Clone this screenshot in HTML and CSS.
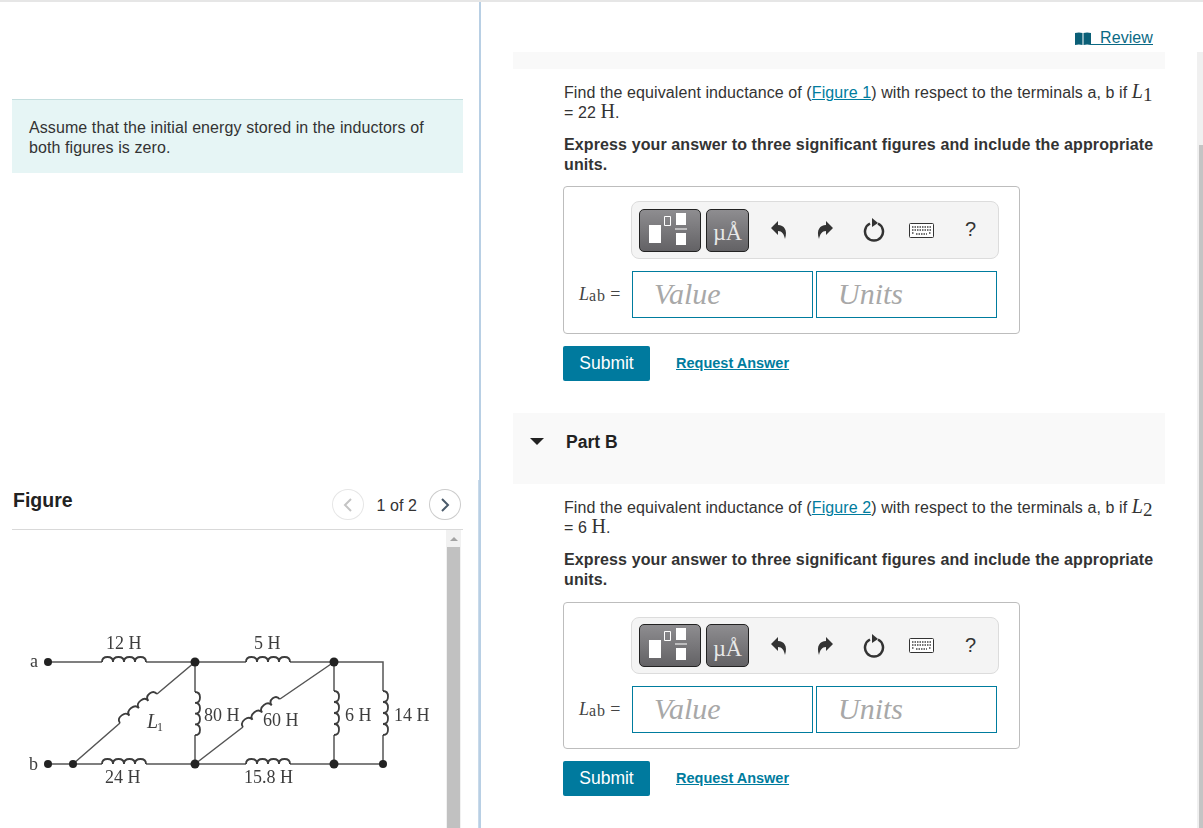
FILE: index.html
```html
<!DOCTYPE html>
<html lang="en">
<head>
    <meta charset="UTF-8">
    <title>Equivalent inductance</title>
    <link rel="stylesheet" href="styles.css">
</head>
<body>
<div class="page">
    <!-- left column: intro and figure -->
    <div class="left">
        <div class="intro">Assume that the initial energy stored in the inductors of both figures is zero.</div>
        <div class="fig-head">
            <span class="fig-title">Figure</span>
            <div class="pager">
                <span class="pager-btn off"><svg width="10" height="14" viewBox="0 0 10 14"><path d="M8 1 L2 7 L8 13" fill="none" stroke="#c4c4c4" stroke-width="2"/></svg></span>
                <span class="pager-text">1 of 2</span>
                <span class="pager-btn"><svg width="10" height="14" viewBox="0 0 10 14"><path d="M2 1 L8 7 L2 13" fill="none" stroke="#4a5a6a" stroke-width="2"/></svg></span>
            </div>
        </div>
        <div class="fig-body">
            <svg class="circuit" width="434" height="298" viewBox="12 530 434 298">
                <g class="wire">
                    <path d="M47 662 H102 M146 662 H246 M290 662 H383 V691 M383 735 V764 H290 M246 764 H146 M102 764 H48"/>
                    <path d="M195 662 V692 M195 735 V764 M334 662 V691 M334 735 V764"/>
                    <path d="M73 764 L120 723 M157 694 L195 662 M195 764 L243 727 M280 699 L334 662"/>
                </g>
                <g class="coil">
                    <path d="M102 662 q0 -5 5.500 -5 q5.500 0 5.500 5 q0 -5 5.500 -5 q5.500 0 5.500 5 q0 -5 5.500 -5 q5.500 0 5.500 5 q0 -5 5.500 -5 q5.500 0 5.500 5"/>
                    <path d="M246 662 q0 -5 5.500 -5 q5.500 0 5.500 5 q0 -5 5.500 -5 q5.500 0 5.500 5 q0 -5 5.500 -5 q5.500 0 5.500 5 q0 -5 5.500 -5 q5.500 0 5.500 5"/>
                    <path d="M102 764 q0 -5 5.500 -5 q5.500 0 5.500 5 q0 -5 5.500 -5 q5.500 0 5.500 5 q0 -5 5.500 -5 q5.500 0 5.500 5 q0 -5 5.500 -5 q5.500 0 5.500 5"/>
                    <path d="M246 764 q0 -5 5.500 -5 q5.500 0 5.500 5 q0 -5 5.500 -5 q5.500 0 5.500 5 q0 -5 5.500 -5 q5.500 0 5.500 5 q0 -5 5.500 -5 q5.500 0 5.500 5"/>
                    <path d="M195 692 q5 0 5 5.400 q0 5.400 -5 5.400 q5 0 5 5.400 q0 5.400 -5 5.400 q5 0 5 5.400 q0 5.400 -5 5.400 q5 0 5 5.400 q0 5.400 -5 5.400"/>
                    <path d="M334 691 q5 0 5 5.500 q0 5.500 -5 5.500 q5 0 5 5.500 q0 5.500 -5 5.500 q5 0 5 5.500 q0 5.500 -5 5.500 q5 0 5 5.500 q0 5.500 -5 5.500"/>
                    <path d="M383 691 q5 0 5 5.500 q0 5.500 -5 5.500 q5 0 5 5.500 q0 5.500 -5 5.500 q5 0 5 5.500 q0 5.500 -5 5.500 q5 0 5 5.500 q0 5.500 -5 5.500"/>
                    <path transform="translate(120 723) rotate(-38)" d="M0 0 q0 -5 6 -5 q6 0 6 5 q0 -5 6 -5 q6 0 6 5 q0 -5 6 -5 q6 0 6 5 q0 -5 5.500 -5 q5.500 0 5.500 5"/>
                    <path transform="translate(243 727) rotate(-37)" d="M0 0 q0 -5 6 -5 q6 0 6 5 q0 -5 6 -5 q6 0 6 5 q0 -5 6 -5 q6 0 6 5 q0 -5 5 -5 q5 0 5 5"/>
                </g>
                <g class="node">
                    <circle cx="48" cy="662" r="4"/>
                    <circle cx="195" cy="662" r="4.500"/>
                    <circle cx="334" cy="662" r="4.500"/>
                    <circle cx="48" cy="764" r="4"/>
                    <circle cx="73" cy="764" r="4"/>
                    <circle cx="195" cy="764" r="4.500"/>
                    <circle cx="334" cy="764" r="4.500"/>
                    <circle cx="383" cy="764" r="4"/>
                </g>
                <g class="label">
                    <text x="30" y="667">a</text>
                    <text x="29" y="770">b</text>
                    <text x="106" y="649">12 H</text>
                    <text x="254" y="649">5 H</text>
                    <text x="105" y="783">24 H</text>
                    <text x="244" y="783">15.8 H</text>
                    <text x="204" y="721">80 H</text>
                    <text x="263" y="726">60 H</text>
                    <text x="345" y="721">6 H</text>
                    <text x="394" y="721">14 H</text>
                    <text x="147" y="728" class="label-l">L</text>
                    <text x="157" y="731" class="label-sub">1</text>
                </g>
            </svg>
            <div class="fig-scroll">
                <span class="fig-arrow"></span>
                <span class="fig-thumb"></span>
            </div>
        </div>
    </div>

    <!-- right column: the two parts -->
    <div class="right">
        <div class="review-row">
            <a class="review" href="#">
                <svg width="16" height="13" viewBox="0 0 16 13"><path d="M0 1 Q4 0 7.500 1 V13 Q4 12 0 13 Z M8.500 1 Q12 0 16 1 V13 Q12 12 8.500 13 Z" fill="#0b5f77"/></svg>
                &nbsp;Review
            </a>
        </div>
        <div class="part-top"></div>

        <div class="part-body first">
            <p class="q">Find the equivalent inductance of (<a href="#">Figure 1</a>) with respect to the terminals a, b if <span class="m"><i>L</i><sub>1</sub></span> = 22 <span class="m">H</span>.</p>
            <p class="q strong">Express your answer to three significant figures and include the appropriate units.</p>
            <div class="answer">
                <div class="toolbar">
                    <span class="tool tool-frac">
                        <svg width="60" height="41" viewBox="0 0 60 41"><path d="M9 15 H21 V33 H9 Z M36 3 H46 V15 H36 Z M36 23 H46 V35 H36 Z M35 18.500 H47 V19.500 H35 Z" fill="#fff"/><path d="M24.500 6.500 H30.500 V15.500 H24.500 Z" fill="none" stroke="#fff"/></svg>
                    </span>
                    <span class="tool tool-unit">&micro;&Aring;</span>
                    <svg class="ico undo" width="18" height="20" viewBox="0 0 18 20"><path d="M1 8 L8 1 V5 C14 5 18 10 15 19 C14 14 12 11 8 11 V15 Z" fill="#333"/></svg>
                    <svg class="ico redo" width="18" height="20" viewBox="0 0 18 20"><path d="M17 8 L10 1 V5 C4 5 0 10 3 19 C4 14 6 11 10 11 V15 Z" fill="#333"/></svg>
                    <svg class="ico reset" width="22" height="24" viewBox="0 0 22 24"><path d="M7 5.500 A9 9 0 1 0 15 5.500" fill="none" stroke="#333" stroke-width="2.500"/><path d="M9 0 L15 5 L9 9 Z" fill="#333"/></svg>
                    <svg class="ico kbd" width="25" height="15" viewBox="0 0 25 15"><rect x="0.500" y="0.500" width="24" height="14" rx="1" fill="#fff" stroke="#333"/><path d="M3 4 H22 M3 7 H22 M3 10 H5 M7 11 H18 M20 10 H22" stroke="#444" stroke-width="1.500" stroke-dasharray="1.500 1"/></svg>
                    <span class="help">?</span>
                </div>
                <div class="inputs">
                    <span class="lab"><i>L</i><span class="lab-sub">ab</span> =</span>
                    <span class="field">Value</span>
                    <span class="field">Units</span>
                </div>
            </div>
            <div class="actions">
                <span class="submit">Submit</span>
                <a class="request" href="#">Request Answer</a>
            </div>
        </div>

        <div class="part-head">
            <span class="tri"></span>
            <span class="part-name">Part B</span>
        </div>

        <div class="part-body second">
            <p class="q">Find the equivalent inductance of (<a href="#">Figure 2</a>) with respect to the terminals a, b if <span class="m"><i>L</i><sub>2</sub></span> = 6 <span class="m">H</span>.</p>
            <p class="q strong">Express your answer to three significant figures and include the appropriate units.</p>
            <div class="answer">
                <div class="toolbar">
                    <span class="tool tool-frac">
                        <svg width="60" height="41" viewBox="0 0 60 41"><path d="M9 15 H21 V33 H9 Z M36 3 H46 V15 H36 Z M36 23 H46 V35 H36 Z M35 18.500 H47 V19.500 H35 Z" fill="#fff"/><path d="M24.500 6.500 H30.500 V15.500 H24.500 Z" fill="none" stroke="#fff"/></svg>
                    </span>
                    <span class="tool tool-unit">&micro;&Aring;</span>
                    <svg class="ico undo" width="18" height="20" viewBox="0 0 18 20"><path d="M1 8 L8 1 V5 C14 5 18 10 15 19 C14 14 12 11 8 11 V15 Z" fill="#333"/></svg>
                    <svg class="ico redo" width="18" height="20" viewBox="0 0 18 20"><path d="M17 8 L10 1 V5 C4 5 0 10 3 19 C4 14 6 11 10 11 V15 Z" fill="#333"/></svg>
                    <svg class="ico reset" width="22" height="24" viewBox="0 0 22 24"><path d="M7 5.500 A9 9 0 1 0 15 5.500" fill="none" stroke="#333" stroke-width="2.500"/><path d="M9 0 L15 5 L9 9 Z" fill="#333"/></svg>
                    <svg class="ico kbd" width="25" height="15" viewBox="0 0 25 15"><rect x="0.500" y="0.500" width="24" height="14" rx="1" fill="#fff" stroke="#333"/><path d="M3 4 H22 M3 7 H22 M3 10 H5 M7 11 H18 M20 10 H22" stroke="#444" stroke-width="1.500" stroke-dasharray="1.500 1"/></svg>
                    <span class="help">?</span>
                </div>
                <div class="inputs">
                    <span class="lab"><i>L</i><span class="lab-sub">ab</span> =</span>
                    <span class="field">Value</span>
                    <span class="field">Units</span>
                </div>
            </div>
            <div class="actions">
                <span class="submit">Submit</span>
                <a class="request" href="#">Request Answer</a>
            </div>
        </div>
    </div>

    <div class="page-scroll"><span class="page-thumb"></span></div>
</div>
</body>
</html>
```

FILE: styles.css
```css
* {
    margin: 0;
    padding: 0;
    box-sizing: border-box;
}

html, body {
    width: 1203px;
    height: 828px;
    overflow: hidden;
    background: #fff;
}

body {
    font: 16px/20px "Liberation Sans", Arial, sans-serif;
    letter-spacing: .09px;
    color: #333;
}

a {
    color: #007c9e;
}

.page {
    display: flex;
    height: 828px;
    border-top: 2px solid #e6e6e6;
}

/* left column */
.left {
    position: relative;
    width: 481px;
    flex: none;
    padding: 97px 0 0 12px;
    border-right: 2px solid #b8cfe4;
}

/* the divider gets 1px wider next to the figure */
.left::after {
    content: '';
    position: absolute;
    top: 478px;
    bottom: 0;
    right: 0;
    width: 1px;
    background: #c9daea;
}

.intro {
    width: 451px;
    height: 74px;
    padding: 18px 17px;
    background: #e6f5f5;
    border-top: 1px solid #c4dede;
}

.fig-head {
    width: 451px;
    height: 57px;
    margin-top: 300px;
    padding: 15px 2px 0 0;
    border-bottom: 1px solid #d9d9d9;
    display: flex;
    justify-content: space-between;
    align-items: flex-start;
}

.fig-title {
    margin: 2px 0 0 1px;
    font-size: 19.500px;
    letter-spacing: 0;
    font-weight: bold;
    color: #222;
}

.pager {
    display: flex;
    align-items: flex-start;
    margin-top: 1px;
}

.pager-btn {
    width: 32px;
    height: 31px;
    border: 1px solid #ccc;
    border-radius: 50%;
    display: flex;
    align-items: center;
    justify-content: center;
}

.pager-btn.off {
    border-color: #e6e6e6;
}

.pager-text {
    margin: 7px 12px 0 12px;
}

.fig-body {
    display: flex;
    width: 451px;
    height: 298px;
}

.circuit {
    flex: none;
    width: 434px;
    filter: blur(.3px);
}

.wire, .coil {
    fill: none;
    stroke: #555;
    stroke-width: 1.500;
}

.coil {
    stroke: #3c3c3c;
    stroke-width: 1.800;
}

.node {
    fill: #222;
}

.label {
    font: 18px "Liberation Serif", "Times New Roman", serif;
    letter-spacing: 0;
    fill: #3d3d3d;
}

.label-l {
    font-style: italic;
    font-size: 20px;
}

.label-sub {
    font-size: 12px;
}

.fig-scroll {
    width: 15px;
    background: #f1f1f1;
    display: flex;
    flex-direction: column;
    align-items: center;
}

.fig-arrow {
    margin-top: 7px;
    border: 4px solid transparent;
    border-top: none;
    border-bottom: 4px solid #a3a3a3;
}

.fig-thumb {
    width: 13px;
    flex: 1;
    margin-top: 6px;
    background: #c1c1c1;
}

/* right column */
.right {
    width: 652px;
    flex: none;
    margin-left: 32px;
}

.review-row {
    height: 50px;
    padding: 26px 12px 0 0;
    text-align: right;
}

.review {
    color: #0b6a85;
}

.review svg {
    vertical-align: -2px;
}

.part-top {
    height: 17px;
    background: #f9f9f9;
}

.part-body {
    padding: 14px 0 0 50px;
    width: 652px;
}

.part-body.first {
    height: 344px;
}

.q {
    width: 600px;
    margin: 0 0 12px 1px;
}

.strong {
    font-weight: bold;
    letter-spacing: .115px;
}

.first .strong {
    margin-bottom: 11px;
}

.q a {
    color: #007c9e;
}

.m {
    font: 20px/0 "Liberation Serif", "Times New Roman", serif;
    letter-spacing: 0;
}

.m sub {
    font-size: 19px;
    line-height: 0;
    vertical-align: -3px;
}

.answer {
    width: 457px;
    height: 148px;
    padding: 14px 0 0 67px;
    border: 1px solid #bdbdbd;
    border-radius: 4px;
}

.second .answer {
    height: 147px;
}

.toolbar {
    width: 368px;
    height: 58px;
    padding-left: 7px;
    background: #f4f4f4;
    border: 1px solid #dcdcdc;
    border-radius: 8px;
    display: flex;
    align-items: center;
}

.second .toolbar {
    height: 57px;
}

.tool {
    height: 43px;
    border: 1px solid #222;
    border-radius: 5px;
    background: linear-gradient(#8e8d90, #636265);
    display: flex;
    align-items: center;
    justify-content: center;
    color: #fff;
}

.tool-frac {
    width: 62px;
}

.tool-unit {
    width: 43px;
    margin-left: 5px;
    padding-top: 7px;
    font: 22.500px/1 "Liberation Serif", "Times New Roman", serif;
    letter-spacing: 0;
    color: #e8e8e8;
}

.ico {
    flex: none;
}

.undo {
    margin-left: 21px;
}

.redo {
    margin-left: 28px;
}

.reset {
    margin-left: 29px;
}

.kbd {
    margin-left: 24px;
}

.help {
    margin: -2px 0 0 31px;
    font-size: 20px;
    color: #333;
}

.inputs {
    display: flex;
    align-items: center;
    margin: 12px 0 0 -67px;
}

.lab {
    width: 68px;
    padding-left: 15px;
    font: 18px/20px "Liberation Serif", "Times New Roman", serif;
    letter-spacing: 0;
    white-space: nowrap;
    color: #444;
}

.lab-sub {
    font-size: 16px;
    letter-spacing: .8px;
    position: relative;
    top: 1px;
}

.field {
    width: 181px;
    height: 47px;
    margin-right: 3px;
    padding: 5px 0 0 21px;
    border: 1px solid #007c9e;
    font: italic 30px/34px "Liberation Serif", "Times New Roman", serif;
    letter-spacing: 0;
    color: #a8a8a8;
}

.actions {
    display: flex;
    align-items: flex-start;
    margin-top: 12px;
}

.submit {
    width: 87px;
    height: 35px;
    border-radius: 2px;
    background: #007a9e;
    color: #fff;
    font-size: 17.500px;
    letter-spacing: 0;
    line-height: 34px;
    text-align: center;
}

.request {
    margin: 7px 0 0 26px;
    font-size: 14.500px;
    letter-spacing: 0;
    font-weight: bold;
}

.part-head {
    height: 71px;
    background: #f9f9f9;
    display: flex;
    align-items: flex-start;
    padding: 18px 0 0 17px;
}

.tri {
    margin-top: 7px;
    border: 7.500px solid transparent;
    border-bottom: none;
    border-top: 7px solid #222;
}

.part-name {
    margin: 1px 0 0 22px;
    font-size: 17.500px;
    letter-spacing: 0;
    font-weight: bold;
    color: #222;
}

.page-scroll {
    margin: 50px 0 0 32px;
    width: 6px;
    height: 776px;
    padding-left: 2px;
    background: #f0f0f0;
    display: flex;
    flex-direction: column;
}

.page-thumb {
    margin-top: 93px;
    flex: 1;
    background: #c4c4c4;
}
```
